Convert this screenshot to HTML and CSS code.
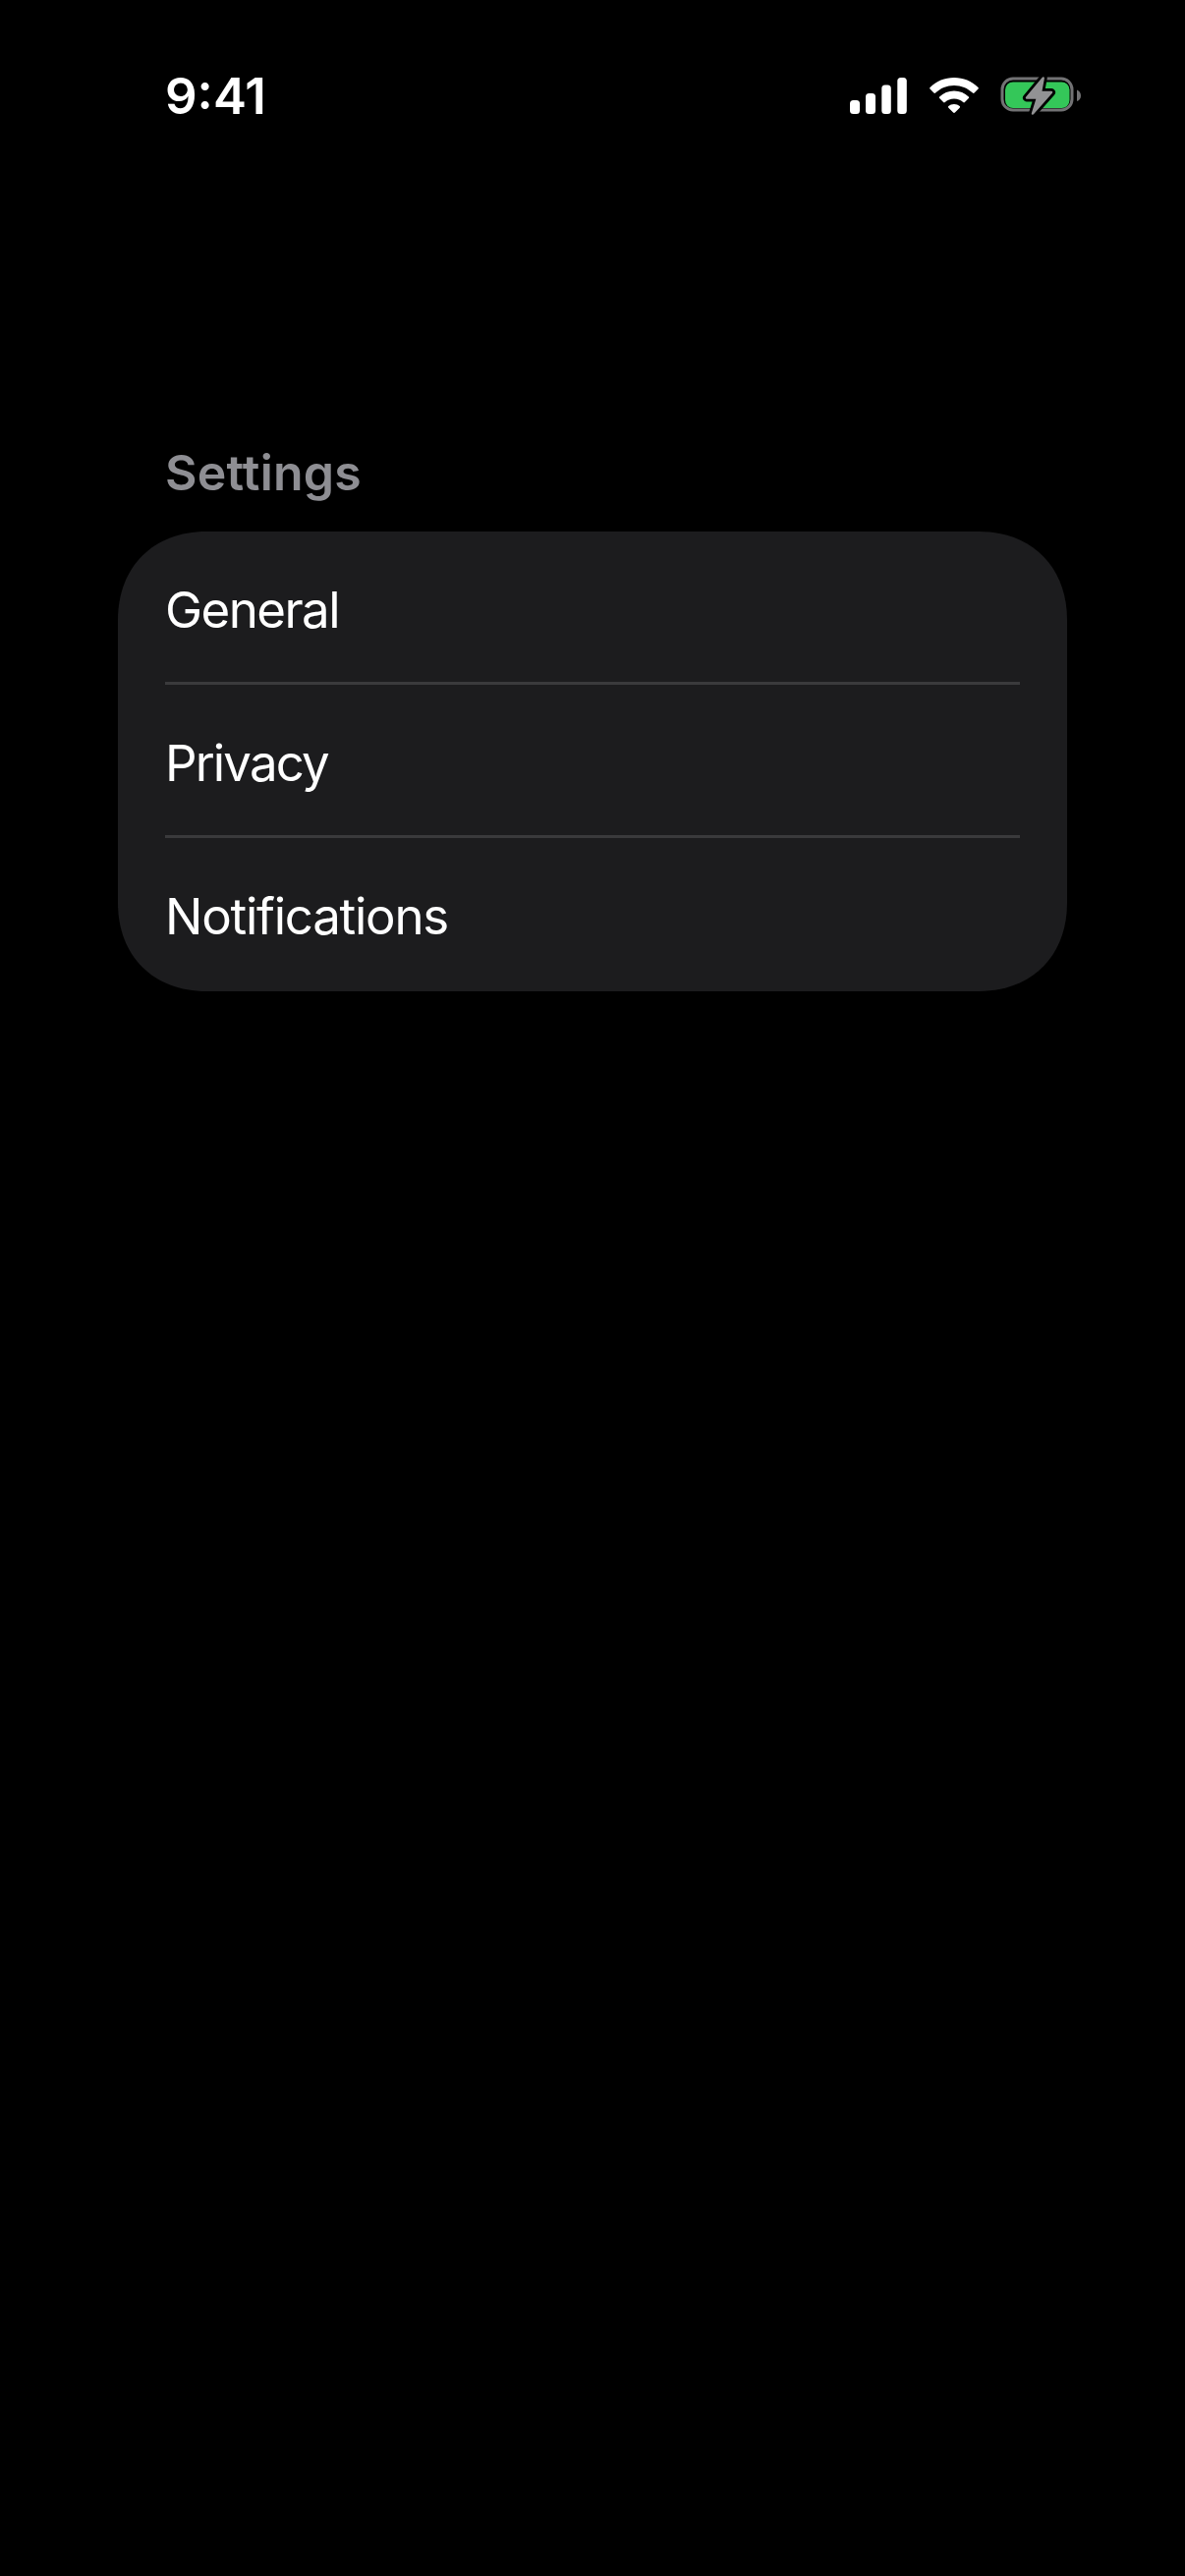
FILE: index.html
```html
<!DOCTYPE html>
<html lang="en">
<head>
<meta charset="utf-8">
<title>Settings</title>
<link rel="stylesheet" href="styles.css">
</head>
<body>
<div class="status-bar">
  <span class="time">9:41</span>
  <div class="status-icons">
    <svg class="icon-signal" width="58" height="37" viewBox="0 0 58 37" fill="#fff">
      <rect x="0" y="23" width="10" height="14" rx="3.500"/>
      <rect x="16" y="16" width="10" height="21" rx="3.500"/>
      <rect x="32.300" y="7.500" width="9.500" height="29.500" rx="3.500"/>
      <rect x="48.300" y="0" width="9.500" height="37" rx="3.500"/>
    </svg>
    <svg class="icon-wifi" width="50" height="36" viewBox="0 0 50 36" fill="#fff">
      <path d="M25 0C34.500 0 43 3.700 49.500 9.900C50 10.400 50 11.100 49.500 11.600L45.600 15.600C45.100 16.100 44.400 16.100 43.900 15.600C38.900 10.800 32.300 8 25 8C17.700 8 11.100 10.800 6.100 15.600C5.600 16.100 4.900 16.100 4.400 15.600L0.500 11.600C0 11.100 0 10.400 0.500 9.900C7 3.700 15.500 0 25 0Z"/>
      <path d="M25 13.500C30.700 13.500 35.900 15.700 39.800 19.400C40.300 19.900 40.300 20.600 39.800 21.100L35.900 25C35.400 25.500 34.700 25.500 34.200 25C31.800 22.800 28.600 21.500 25 21.500C21.400 21.500 18.200 22.800 15.800 25C15.300 25.500 14.600 25.500 14.100 25L10.200 21.100C9.700 20.600 9.700 19.900 10.200 19.400C14.100 15.700 19.300 13.500 25 13.500Z"/>
      <path d="M25 27C27.200 27 29.200 27.800 30.700 29.100C31.200 29.600 31.200 30.200 30.700 30.700L25.900 35.500C25.400 36 24.600 36 24.100 35.500L19.300 30.700C18.800 30.200 18.800 29.600 19.300 29.100C20.800 27.800 22.800 27 25 27Z"/>
    </svg>
    <svg class="icon-battery" width="82" height="40" viewBox="0 0 82 40">
      <rect x="2" y="2" width="71" height="32" rx="11" fill="none" stroke="#727274" stroke-width="3"/>
      <rect x="5" y="5.500" width="65.500" height="26.500" rx="8" fill="#34c759"/>
      <path d="M78 13.500C80.500 14.500 82 16.500 82 19.500C82 22.500 80.500 24 78 25Z" fill="#727274"/>
      <path d="M43.700 1.500L27 21.500H38L33 37.500L52 16H41L43.700 1.500Z" fill="#000" stroke="#000" stroke-width="8" stroke-linejoin="round"/>
      <path d="M43.700 1.500L27 21.500H38L33 37.500L52 16H41L43.700 1.500Z" fill="#929294" stroke="#929294" stroke-width="2.500" stroke-linejoin="round"/>
    </svg>
  </div>
</div>
<main class="content">
  <h1 class="section-title">Settings</h1>
  <ul class="settings-card">
    <li class="settings-row"><span class="row-label row-label-general">General</span></li>
    <li class="settings-row"><span class="row-label row-label-privacy">Privacy</span></li>
    <li class="settings-row"><span class="row-label">Notifications</span></li>
  </ul>
</main>
</body>
</html>
```
FILE: styles.css
```css
* {
  box-sizing: border-box;
}

html,
body {
  margin: 0;
  padding: 0;
  background: #000;
}

body {
  min-height: 2622px;
  font-family: Inter, "Liberation Sans", sans-serif;
  color: #fff;
}

.status-bar {
  display: flex;
  align-items: center;
  justify-content: space-between;
  height: 78px;
  margin-top: 58px;
  padding: 0 106px 0 168px;
}

.time {
  padding-top: 2px;
  font-size: 51px;
  font-weight: 600;
  line-height: 44px;
}

.status-icons {
  display: flex;
  align-items: flex-start;
  gap: 22.500px;
  padding-top: 1px;
}

.status-icons svg {
  display: block;
}

.icon-signal,
.icon-wifi {
  margin-top: 1px;
}

.content {
  padding: 0 120px;
  margin-top: 313px;
}

.section-title {
  margin: 0 0 28px 48px;
  font-size: 50px;
  font-weight: 600;
  line-height: 64px;
  letter-spacing: 0.200px;
  color: #8e8e93;
}

.settings-card {
  list-style: none;
  margin: 0;
  padding: 0 48px;
  background: #1c1c1e;
  clip-path: path("M90 0H876C930 0 966 36 966 90V378C966 432 930 468 876 468H90C36 468 0 432 0 378V90C0 36 36 0 90 0Z");
}

.settings-row {
  display: flex;
  align-items: center;
  height: 156px;
  padding-top: 6px;
  border-bottom: 3px solid #3a3a3c;
}

.settings-row:last-child {
  padding-top: 3px;
  border-bottom: 0;
}

.row-label {
  font-size: 51px;
  font-weight: 375;
  line-height: 64px;
  letter-spacing: -1.250px;
}

.row-label-general {
  letter-spacing: -1.550px;
}

.row-label-privacy {
  letter-spacing: -1.850px;
}
```
